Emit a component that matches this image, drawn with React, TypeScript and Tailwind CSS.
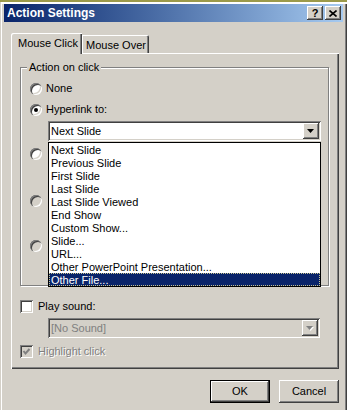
import React from 'react';

const raised =
  'shadow-[inset_-1px_-1px_0_#404040,inset_1px_1px_0_#fff,inset_-2px_-2px_0_#808080,inset_2px_2px_0_#d4d0c8]';
const sunken =
  'shadow-[inset_1px_1px_0_#808080,inset_-1px_-1px_0_#fff,inset_2px_2px_0_#404040,inset_-2px_-2px_0_#d4d0c8]';

const links = [
  'Next Slide',
  'Previous Slide',
  'First Slide',
  'Last Slide',
  'Last Slide Viewed',
  'End Show',
  'Custom Show...',
  'Slide...',
  'URL...',
  'Other PowerPoint Presentation...',
  'Other File...',
];

function Radio({ checked, disabled }: { checked?: boolean; disabled?: boolean }) {
  return (
    <span
      className={`relative w-[12px] h-[12px] rounded-full shrink-0 ${
        disabled ? 'bg-[#d4d0c8]' : 'bg-white'
      } shadow-[inset_1px_1px_0_#808080,inset_2px_2px_0_#404040,inset_-1px_-1px_0_#fff,inset_-2px_-2px_0_#d4d0c8]`}
    >
      {checked && <span className="absolute left-[4px] top-[4px] w-[4px] h-[4px] rounded-full bg-black" />}
    </span>
  );
}

function Check({ checked, disabled }: { checked?: boolean; disabled?: boolean }) {
  return (
    <span className={`w-[13px] h-[13px] shrink-0 flex ${disabled ? 'bg-[#d4d0c8]' : 'bg-white'} ${sunken}`}>
      {checked && (
        <svg width="13" height="13" viewBox="0 0 13 13">
          <polyline
            points="3.5,6 5.5,8.5 9.5,4"
            fill="none"
            stroke={disabled ? '#808080' : '#000'}
            strokeWidth="2"
          />
        </svg>
      )}
    </span>
  );
}

function Arrow({ disabled }: { disabled?: boolean }) {
  return (
    <span className={`w-[16px] shrink-0 flex items-center justify-center bg-[#d4d0c8] ${raised}`}>
      <svg width="8" height="5" viewBox="0 0 8 5">
        {disabled && <polygon points="1,1 8,1 4.5,5" fill="#fff" />}
        <polygon points="0,0 7,0 3.5,4" fill={disabled ? '#808080' : '#000'} />
      </svg>
    </span>
  );
}

export default function App() {
  return (
    <div className="w-[347px] h-[410px] overflow-hidden bg-[#d4d0c8] font-['Liberation_Sans',Arial,sans-serif] text-[11px] leading-[13px] text-black">
      <div className="h-[2px] bg-[#9c9a4a]" />
      <div className="h-[408px] px-[4px] pt-[2px] shadow-[inset_1px_0_0_#d4d0c8,inset_2px_2px_0_#fff,inset_-1px_0_0_#404040,inset_-2px_0_0_#808080]">
        {/* Title bar */}
        <div className="h-[18px] flex items-center bg-linear-to-r from-[#0a246a] to-[#a6caf0] pl-[3px] pr-[2px]">
          <span className="text-white font-bold text-[12px] flex-1">Action Settings</span>
          <div className="flex gap-[2px]">
            <span className={`w-[16px] h-[14px] flex items-center justify-center bg-[#d4d0c8] font-bold text-[11px] ${raised}`}>
              ?
            </span>
            <span className={`w-[16px] h-[14px] flex items-center justify-center bg-[#d4d0c8] ${raised}`}>
              <svg width="8" height="7" viewBox="0 0 8 7">
                <path d="M0.5 0.5 L7.5 6.5 M7.5 0.5 L0.5 6.5" stroke="#000" strokeWidth="1.6" />
              </svg>
            </span>
          </div>
        </div>

        {/* Tabs */}
        <div className="pt-[11px] pl-[7px] flex items-end">
          <div className="relative z-10 -mb-px w-[71px] h-[21px] bg-[#d4d0c8] pt-[4px] pl-[7px] rounded-tl-[2px] shadow-[inset_1px_1px_0_#fff,inset_-1px_0_0_#404040,inset_-2px_0_0_#808080]">
            Mouse Click
          </div>
          <div className="w-[67px] h-[18px] pt-[4px] pl-[4px] rounded-tr-[2px] shadow-[inset_1px_1px_0_#fff,inset_-1px_0_0_#404040,inset_-2px_0_0_#808080]">
            Mouse Over
          </div>
        </div>

        {/* Tab panel */}
        <div className="ml-[7px] w-[328px] h-[316px] pl-[9px] pt-[14px] shadow-[inset_1px_1px_0_#fff,inset_-1px_-1px_0_#404040,inset_-2px_-2px_0_#808080]">
          <div className="relative w-[309px] h-[219px] border border-[#808080] shadow-[1px_1px_0_#fff,inset_1px_1px_0_#fff] pt-[14px] pl-[9px]">
            <span className="absolute left-[6px] -top-[7px] px-[2px] bg-[#d4d0c8]">Action on click</span>

            <div className="h-[13px] flex items-center gap-[4px]">
              <Radio />
              <span>None</span>
            </div>
            <div className="mt-[8px] h-[13px] flex items-center gap-[4px]">
              <Radio checked />
              <span>Hyperlink to:</span>
            </div>

            <div className={`relative mt-[5px] ml-[18px] w-[273px] h-[20px] flex p-[2px] bg-white ${sunken}`}>
              <span className="flex-1 pl-[1px] flex items-center">Next Slide</span>
              <Arrow />
              {/* open dropdown list */}
              <div className="absolute z-20 left-0 top-[21px] w-[273px] border border-black bg-white">
                {links.map((l) => (
                  <div
                    key={l}
                    className={`h-[13px] pl-[2px] pt-[1px] flex items-center ${
                      l === 'Other File...'
                        ? 'bg-[#0a246a] text-white outline-1 outline-dotted -outline-offset-1 outline-[#c8c490]'
                        : ''
                    }`}
                  >
                    {l}
                  </div>
                ))}
              </div>
            </div>

            {/* radios hidden behind the open list */}
            <div className="mt-[6px] h-[13px] flex items-center">
              <Radio />
            </div>
            <div className="mt-[34px] h-[13px] flex items-center">
              <Radio disabled />
            </div>
            <div className="mt-[32px] h-[13px] flex items-center">
              <Radio disabled />
            </div>
          </div>

          <div className="mt-[14px] h-[13px] flex items-center gap-[5px]">
            <Check />
            <span>Play sound:</span>
          </div>
          <div className={`mt-[5px] ml-[28px] w-[272px] h-[20px] flex p-[2px] bg-[#d4d0c8] ${sunken}`}>
            <span className="flex-1 pl-[1px] flex items-center text-[#808080]">[No Sound]</span>
            <Arrow disabled />
          </div>
          <div className="mt-[7px] h-[13px] flex items-center gap-[5px]">
            <Check checked disabled />
            <span className="text-[#808080] [text-shadow:1px_1px_0_#fff]">Highlight click</span>
          </div>
        </div>

        {/* Buttons */}
        <div className="mt-[11px] pr-[4px] flex justify-end gap-[9px]">
          <button className={`w-[60px] h-[23px] border border-black bg-[#d4d0c8] ${raised}`}>OK</button>
          <button className={`w-[60px] h-[23px] bg-[#d4d0c8] ${raised}`}>Cancel</button>
        </div>
      </div>
    </div>
  );
}
